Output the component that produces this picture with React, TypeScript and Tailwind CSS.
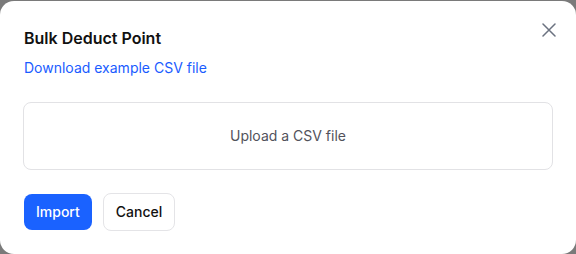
import React from "react";

export default function App() {
  return (
    <div
      className="w-[576px] h-[254px] bg-[#7a7a7a] pt-[1px] overflow-hidden"
      style={{ fontFamily: "Inter, 'Noto Sans', sans-serif" }}
    >
      <div className="relative h-[253px] w-full rounded-[14px] bg-white px-[23px] pt-[25px]">
        <button className="absolute right-[20px] top-[22px] text-[#6b7280]" aria-label="Close">
          <svg width="14" height="14" viewBox="0 0 14 14" fill="none">
            <path d="M1 1L13 13M13 1L1 13" stroke="currentColor" strokeWidth="1.5" strokeLinecap="round" />
          </svg>
        </button>
        <h2 className="pl-[1px] text-base leading-6 font-semibold text-[#111111]">Bulk Deduct Point</h2>
        <a className="mt-[8px] block pl-[1px] text-sm leading-5 text-[#1a5cff]" href="#">
          Download example CSV file
        </a>
        <div className="mt-[24px] flex h-[68px] items-center justify-center rounded-lg border border-[#e2e2e5] text-sm text-[#52525b]">
          Upload a CSV file
        </div>
        <div className="mt-[23px] flex items-center gap-[11px] pl-[1px]">
          <button className="h-9 rounded-lg bg-[#1a62ff] px-3 text-sm font-medium text-white">Import</button>
          <button className="h-[38px] rounded-lg border border-[#e4e4e7] bg-white px-3 text-sm font-medium text-[#111111]">
            Cancel
          </button>
        </div>
      </div>
    </div>
  );
}
